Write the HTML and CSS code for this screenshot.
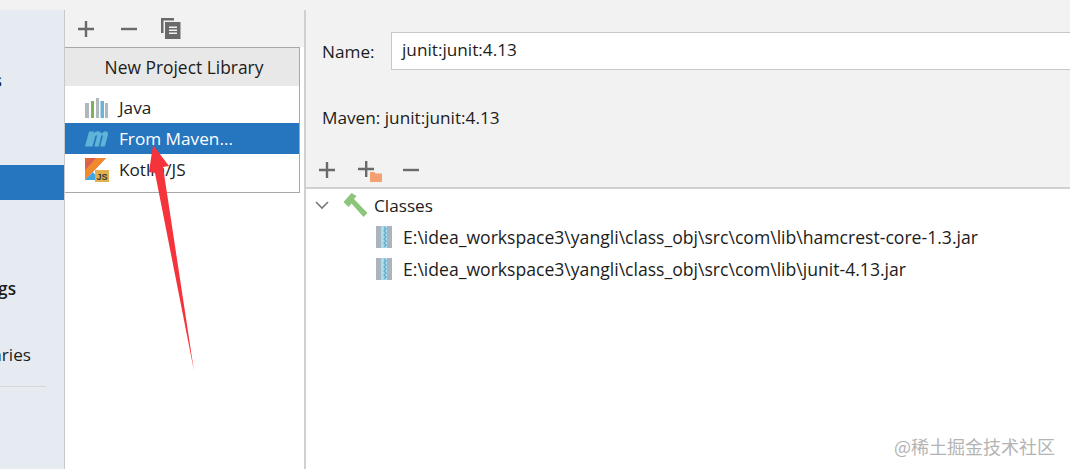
FILE: index.html
```html
<!DOCTYPE html>
<html lang="en">
<head>
<meta charset="utf-8">
<title>Project Structure</title>
<link rel="stylesheet" href="styles.css">
</head>
<body>
<div class="app">
  <aside class="sidebar">
    <div class="side-row bold first"><span>Project Settings</span></div>
    <div class="side-row selected"></div>
    <div class="side-row bold platform"><span>Platform Settings</span></div>
    <div class="side-row global"><span>Global Libraries</span></div>
    <div class="side-sep"></div>
  </aside>
  <section class="middle">
    <div class="mid-toolbar">
      <svg class="tool" viewBox="0 0 18 18"><path d="M7.800 1h2.400v6.800H17v2.400h-6.800V17H7.800v-6.800H1V7.800h6.800z" fill="#6a6a6a"/></svg>
      <svg class="tool" viewBox="0 0 18 18"><path d="M1 7.800h16v2.400H1z" fill="#6a6a6a"/></svg>
      <svg class="tool tool-copy" viewBox="0 0 20 21"><path d="M0 0h13v2.500H2.500V15H0z" fill="#6a6a6a"/><path d="M4 4h15.500v17H4z" fill="#6a6a6a"/><path d="M8 8.500h8V10H8zM8 11.500h8V13H8zM8 14.500h8V16H8z" fill="#f2f2f2"/></svg>
    </div>
    <div class="mid-list"></div>
  </section>
  <main class="detail">
    <div class="name-row">
      <label class="name-label">Name:</label>
      <div class="name-input">junit:junit:4.13</div>
    </div>
    <div class="maven">Maven: junit:junit:4.13</div>
    <div class="detail-toolbar">
      <svg class="tool" viewBox="0 0 18 18"><path d="M7.800 1h2.400v6.800H17v2.400h-6.800V17H7.800v-6.800H1V7.800h6.800z" fill="#6a6a6a"/></svg>
      <svg class="tool tool-folder" viewBox="0 0 24 24"><path d="M7 3h2.400v6.800H16v2.400H9.400V19H7v-6.800H0V9.800h7z" fill="#6a6a6a"/><path d="M12 14h4.500l1 1.500H24V24H12z" fill="#f4a070"/></svg>
      <svg class="tool tool-minus" viewBox="0 0 18 18"><path d="M1 7.800h16v2.400H1z" fill="#6a6a6a"/></svg>
    </div>
    <div class="tree">
      <div class="tree-row root">
        <svg class="chev" viewBox="0 0 14 14"><path d="M1 4l6 6 6-6" fill="none" stroke="#7a7a7a" stroke-width="1.600"/></svg>
        <svg class="hammer" viewBox="0 0 24 24"><path d="M0 9L8 0l5 3-2.500 3L24 20l-4 4L8 10.500 5 14z" fill="#8cc67a"/></svg>
        <span>Classes</span>
      </div>
      <div class="tree-row jar-row">
        <svg class="jar" viewBox="0 0 16 22"><path d="M0 0h5v22H0zM11 0h5v22h-5z" fill="#a9b4bd"/><path d="M5 0h6v22H5z" fill="#a8dcf0"/><path d="M8 1l2 2-2 2 2 2-2 2 2 2-2 2 2 2-2 2 2 2-2 2" fill="none" stroke="#5fa8c8" stroke-width="1.200"/></svg>
        <span>E:\idea_workspace3\yangli\class_obj\src\com\lib\hamcrest-core-1.3.jar</span>
      </div>
      <div class="tree-row jar-row">
        <svg class="jar" viewBox="0 0 16 22"><path d="M0 0h5v22H0zM11 0h5v22h-5z" fill="#a9b4bd"/><path d="M5 0h6v22H5z" fill="#a8dcf0"/><path d="M8 1l2 2-2 2 2 2-2 2 2 2-2 2 2 2-2 2 2 2-2 2" fill="none" stroke="#5fa8c8" stroke-width="1.200"/></svg>
        <span>E:\idea_workspace3\yangli\class_obj\src\com\lib\junit-4.13.jar</span>
      </div>
    </div>
  </main>
</div>

<div class="popup">
  <div class="popup-title">New Project Library</div>
  <div class="popup-items">
    <div class="popup-item">
      <svg class="pi-icon" viewBox="0 0 23 20"><path d="M0 5h4v15H0z" fill="#b0b8bd"/><path d="M6 3h3v17H6z" fill="#7cb35a"/><path d="M11 0h3v20h-3z" fill="#b0b8bd"/><path d="M15.500 3H19v17h-3.500z" fill="#6bb3d6"/><path d="M20 5h3v15h-3z" fill="#b0b8bd"/></svg>
      <span>Java</span>
    </div>
    <div class="popup-item active">
      <svg class="pi-icon" viewBox="0 0 23 18"><path d="M0 17L4 2h5l-.500 2C10 2.500 12 1.500 14 2c1.300.300 2 1.200 2.300 2.300C18 2.500 20 1.500 21.500 2c1.500.500 1.800 2 1.400 3.500L19.800 17h-4.600l2.700-10.500c.200-.800-.800-1-1.800.200L13.800 17H9.300l2.700-10.500c.200-.800-.800-1-1.800.200L7.500 17z" fill="#5cb4d6"/></svg>
      <span>From Maven...</span>
    </div>
    <div class="popup-item kotlin-item">
      <svg class="pi-icon kotlin" viewBox="0 0 24 24"><defs><linearGradient id="kg" x1="0" y1="0" x2="1" y2="1"><stop offset="0" stop-color="#e8682a"/><stop offset=".5" stop-color="#c8508a"/><stop offset="1" stop-color="#4a8fe0"/></linearGradient></defs><path d="M0 0h21L0 22z" fill="url(#kg)"/><path d="M11 0h10L0 22V12z" fill="#f08a2c"/><path d="M0 22l8-8 6 8z" fill="#3fa6e6"/><path d="M10 12h14v12H10z" fill="#e2b04e"/><text x="11.500" y="22" class="js-text">JS</text></svg>
      <span>Kotlin/JS</span>
    </div>
  </div>
</div>

<svg class="arrow" viewBox="0 0 60 240"><path d="M6 3L22 24 16 25 47 229 8 31 2 30z" fill="#f5333a"/></svg>
<div class="watermark">@稀土掘金技术社区</div>
</body>
</html>
```

FILE: styles.css
```css
* { box-sizing: border-box; }
html, body { margin: 0; height: 100%; }
body {
  width: 1070px;
  height: 469px;
  overflow: hidden;
  position: relative;
  background: #f2f2f2;
  font-family: "Open Sans", "Noto Sans", sans-serif;
  font-size: 17.2px;
  color: #1c1c1c;
}
.app {
  display: grid;
  grid-template-columns: 65px 239px 1fr;
  height: 459px;
  margin-top: 10px;
}
.sidebar {
  background: #e6ebf2;
  border-right: 1px solid #c9c9c9;
  overflow: hidden;
  display: flex;
  flex-direction: column;
}
.side-row {
  display: flex;
  justify-content: flex-end;
  white-space: nowrap;
  height: 35px;
  align-items: center;
  flex: none;
}
.side-row span { flex: none; }
.first { margin-top: 53px; padding-right: 62px; }
.bold { font-weight: 600; }
.selected { margin-top: 67px; background: #2675bf; color: #fff; }
.platform { margin-top: 71px; padding-right: 48px; }
.global { margin-top: 31px; padding-right: 33px; }
.side-sep { height: 1px; background: #d8d8d8; margin: 14px 18px 0 0; }

.middle { display: flex; flex-direction: column; }
.mid-toolbar {
  height: 37px;
  display: flex;
  align-items: center;
  gap: 25px;
  padding-left: 12px;
  flex: none;
}
.mid-list { flex: 1; background: #fff; }
.tool { width: 18px; height: 18px; flex: none; }
.tool-copy { width: 20px; height: 21px; margin-left: -2px; }
.detail {
  border-left: 2px solid #d0d0d0;
  display: flex;
  flex-direction: column;
  min-width: 0;
}
.name-row {
  display: flex;
  align-items: center;
  padding: 22px 0 0 16px;
  height: 60px;
}
.name-label { width: 69px; flex: none; }
.name-input {
  flex: 1;
  height: 38px;
  background: #fff;
  border: 1px solid #c8c8c8;
  border-right: 0;
  padding-left: 10px;
  line-height: 34px;
}
.maven { margin: 37px 0 0 16px; line-height: 22px; }
.detail-toolbar {
  height: 58px;
  display: flex;
  align-items: flex-end;
  gap: 22px;
  padding: 0 0 8px 12px;
  flex: none;
}
.tool-folder { width: 24px; height: 24px; margin-bottom: -3px; }
.tool-minus { margin-left: -2px; }
.tree {
  flex: 1;
  background: #fff;
  border-top: 2px solid #d0d0d0;
}
.tree-row { display: flex; align-items: center; height: 32px; white-space: nowrap; }
.root { padding-left: 9px; }
.chev { width: 14px; height: 14px; margin-right: 14px; flex: none; }
.hammer { width: 25px; height: 24px; margin-right: 6px; flex: none; }
.jar-row { padding-left: 70px; font-size: 17.6px; }
.jar { width: 16px; height: 22px; margin-right: 11px; flex: none; }

.popup {
  position: absolute;
  left: 65px;
  top: 47px;
  width: 235px;
  height: 146px;
  background: #fff;
  border: 1px solid #a8a8a8;
  border-left: 0;
}
.popup-title {
  height: 38px;
  padding-left: 4px;
  background: #e8e8e8;
  text-align: center;
  line-height: 38px;
  font-size: 17.4px;
}
.popup-items { padding-top: 6px; }
.popup-item { display: flex; align-items: center; height: 31px; padding-left: 20px; gap: 11px; }
.popup-item.active { background: #2675bf; color: #fff; }
.kotlin-item { gap: 10px; }
.pi-icon { width: 23px; height: 20px; flex: none; }
.active .pi-icon { height: 19px; }
.kotlin { width: 24px; height: 24px; }
.js-text { font: 700 9px "Liberation Sans", sans-serif; fill: #3a3a3a; }
.arrow { position: absolute; left: 147px; top: 142px; width: 60px; height: 240px; }
.watermark {
  position: absolute;
  left: 894px;
  top: 433px;
  font-family: "Noto Sans CJK SC", "Noto Sans", sans-serif;
  font-size: 18px;
  color: #b4b4b4;
  white-space: nowrap;
}
```
